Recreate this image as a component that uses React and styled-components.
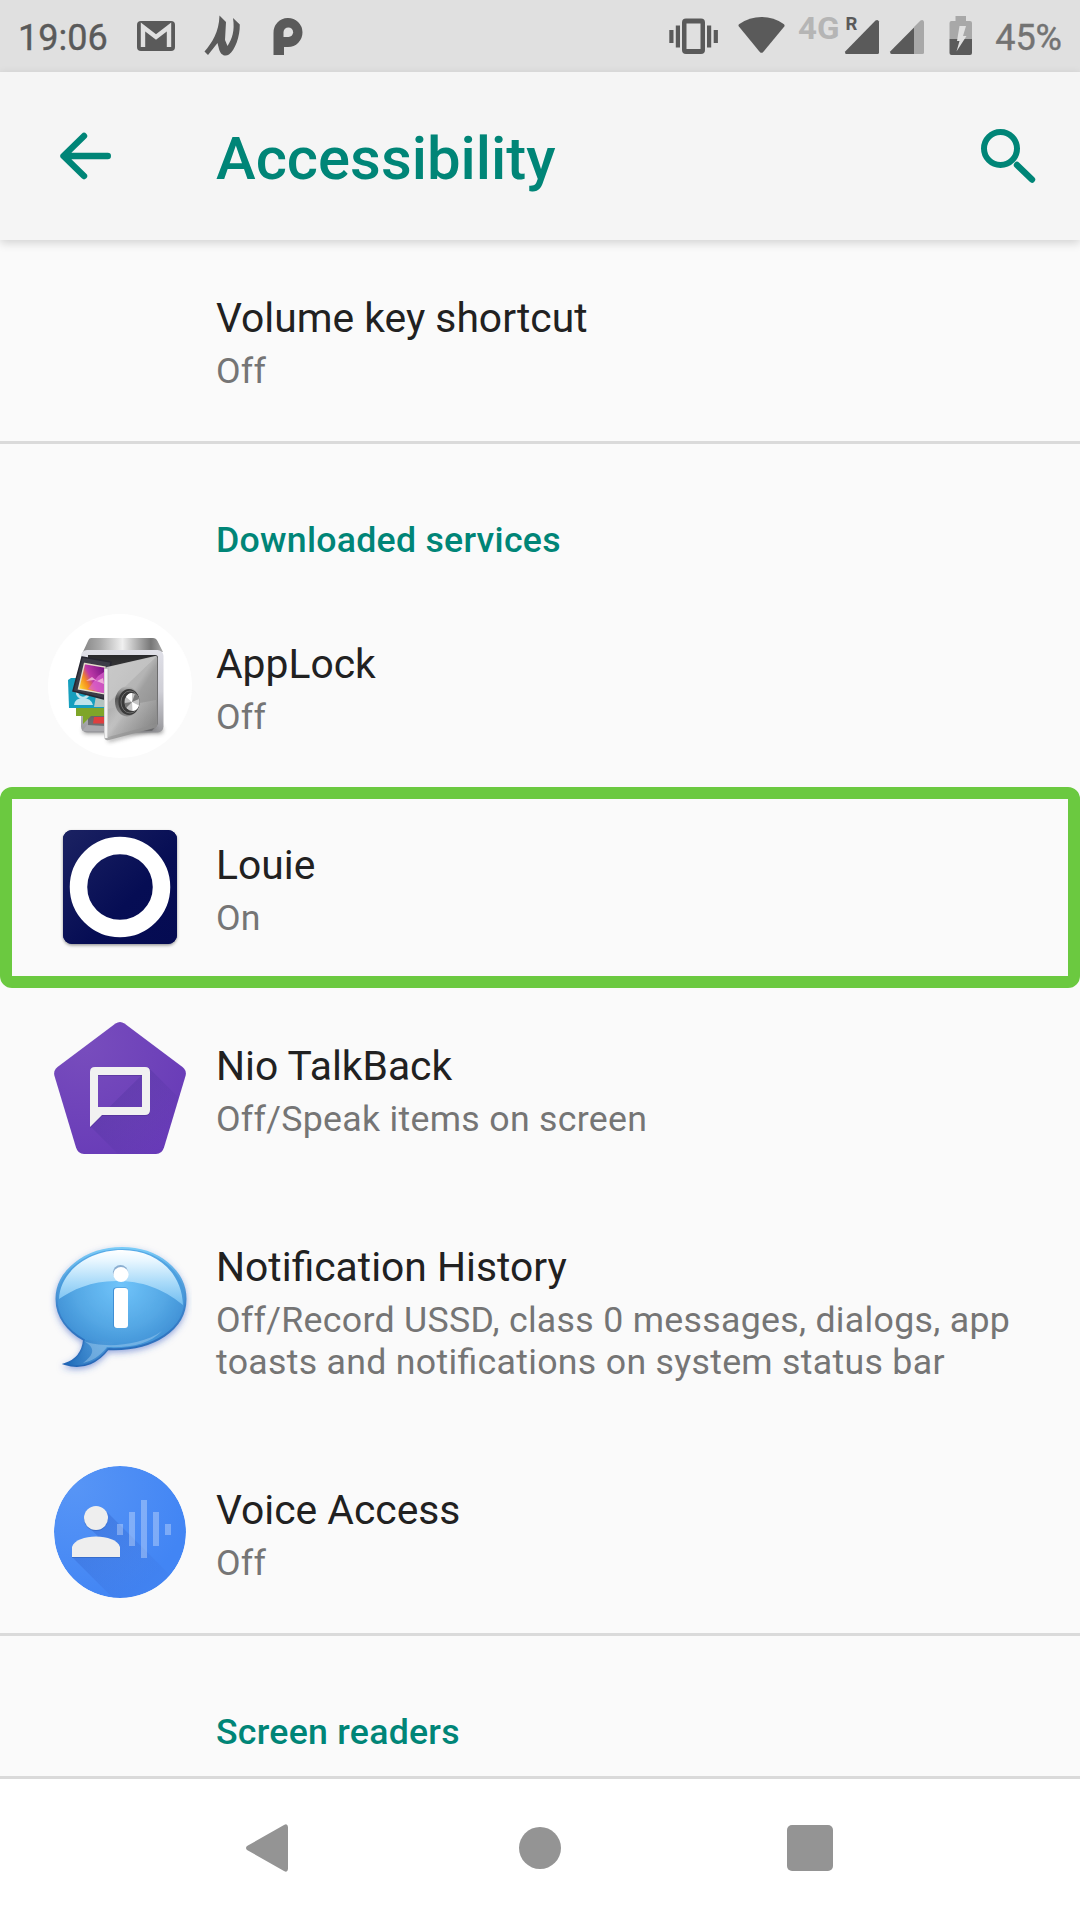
import React from "react";
import styled, { createGlobalStyle, css } from "styled-components";

const Global = createGlobalStyle`
  * { box-sizing: border-box; }
  body { margin: 0; background: #fafafa; font-family: Roboto, "Liberation Sans", sans-serif; }
  svg { display: block; }
`;

const Screen = styled.div`
  width: 1080px;
  height: 1920px;
  display: flex;
  flex-direction: column;
  overflow: hidden;
  background: #fafafa;
`;

const StatusBar = styled.div`
  flex: none;
  height: 72px;
  display: flex;
  align-items: center;
  justify-content: space-between;
  padding: 0 18px;
  background: #e0e0e0;
`;

const StatusText = styled.span`
  min-width: ${(p) => p.$width}px;
  padding-top: 3px;
  font-size: 36px;
  line-height: 42px;
  white-space: nowrap;
  text-align: ${(p) => p.$align || "left"};
  color: ${(p) => p.$color};
  -webkit-text-stroke: 0.4px ${(p) => p.$color};
`;

const StatusGroup = styled.div`
  display: flex;
  align-items: center;
`;

const StatusGlyph = styled.svg`
  flex: none;
  width: ${(p) => p.$w}px;
  height: 72px;
`;

const AppBar = styled.header`
  flex: none;
  height: 168px;
  display: flex;
  align-items: center;
  padding: 0 36px 0 48px;
  background: #f5f5f5;
  position: relative;
  box-shadow: 0 3px 9px rgba(0, 0, 0, 0.16);
`;

const AppTitle = styled.h1`
  flex: 1;
  margin: 0 0 0 96px;
  padding-top: 5px;
  font-size: 59.8px;
  line-height: 70px;
  font-weight: 500;
  color: #008577;
`;

const List = styled.main`
  flex: 1;
  min-height: 0;
  overflow: hidden;
  display: flex;
  flex-direction: column;
`;

const Divider = styled.div`
  flex: none;
  height: 3px;
  background: #dadada;
`;

const Category = styled.h2`
  flex: none;
  height: 142px;
  margin: 0;
  padding: 75px 48px 0 216px;
  font-size: 35.7px;
  line-height: 42px;
  font-weight: 500;
  letter-spacing: 0.25px;
  color: #008577;
`;

const Row = styled.div`
  flex: none;
  display: flex;
  align-items: center;
  padding-right: 48px;
  position: relative;
  ${(p) =>
    p.$highlighted &&
    css`
      &::after {
        content: "";
        position: absolute;
        inset: 0;
        border: 12px solid #6bc940;
        border-radius: 12px;
      }
    `}
`;

const IconCell = styled.div`
  flex: none;
  width: 216px;
  padding: 0 0 1px 48px;
`;

const RowText = styled.div`
  flex: 1;
  padding: 54px 0 49px;
`;

const RowTitle = styled.div`
  margin-bottom: 8px;
  font-size: 40.8px;
  line-height: 48px;
  color: #212121;
`;

const RowSummary = styled.div`
  font-size: 35.7px;
  line-height: 42px;
  letter-spacing: 0.3px;
  font-feature-settings: "liga" 1;
  color: #757575;
`;

const NavBar = styled.nav`
  flex: none;
  height: 144px;
  display: flex;
  align-items: center;
  justify-content: center;
  padding-bottom: 3px;
  border-top: 3px solid #dadada;
  background: #fff;
`;

const NavButton = styled.div`
  width: 270px;
  display: flex;
  justify-content: center;
`;

function NotificationGlyphs() {
  return (
    <StatusGlyph $w={200} viewBox="110 0 200 72">
      <rect x="137" y="21" width="38" height="30" rx="4" fill="#5a5a5a" />
      <path d="M143 47V27L156 37L169 27V47" fill="none" stroke="#e0e0e0" strokeWidth="4.4" />
      <path d="M219.500 15.500L226 22L225 40L227.500 46C232 39 235 31 233 18L239.800 24.500C240 37 235 50 229 54.500C225 57 220.500 55 219 49L217.500 43L208 55L204.500 51.500C212 43 219 32 219.500 15.500Z" fill="#5a5a5a" />
      <path d="M273.500 55V33A14.500 14.500 0 1 1 288 47H284V55Z" fill="#5a5a5a" />
      <path d="M283.500 37V32A4.800 4.800 0 1 1 288.500 37Z" fill="#e0e0e0" />
    </StatusGlyph>
  );
}

function SystemGlyphs() {
  return (
    <StatusGlyph $w={334} viewBox="660 0 334 72">
      <g fill="#5a5a5a">
        <path fillRule="evenodd" d="M686 18.500H701A4 4 0 0 1 705 22.500V50A4 4 0 0 1 701 54H686A4 4 0 0 1 682 50V22.500A4 4 0 0 1 686 18.500ZM686.500 23.500V49H700.500V23.500Z" />
        <rect x="675.800" y="25.500" width="4.200" height="22" />
        <rect x="669.300" y="30" width="4.200" height="13" />
        <rect x="707" y="25.500" width="4.200" height="22" />
        <rect x="713.700" y="30" width="4.200" height="13" />
        <path d="M739 24.200C753 14.700 770 14.700 784 24.200Q785 25.300 784.300 26.500L763 52.200Q761.500 53.500 760 52.200L738.900 26.500Q738 25.300 739 24.200Z" />
        <path d="M879 21.500V52.500Q879 54 877.500 54H846Q844.500 53.500 845.200 51.500L875.500 20.500Q878 19 879 21.500Z" />
      </g>
      <path d="M924 21.500V52.500Q924 54 922.500 54H914V27L920.500 20.500Q923 19 924 21.500Z" fill="#a8a8a8" />
      <path d="M914 27.500V54H891.500Q889.500 53.500 890.200 51.500Z" fill="#5a5a5a" />
      <path d="M949.500 39V23Q949.500 21 951.500 21H955.500V16H966V21H970Q972 21 972 23V39Z" fill="#a8a8a8" />
      <path d="M949.500 39H972V53Q972 55 970 55H951.500Q949.500 55 949.500 53Z" fill="#5a5a5a" />
      <path d="M959.500 26H966L963 36H966.500L956.500 51.500L959.500 41H957Z" fill="#e0e0e0" />
      <text x="798" y="39" fontFamily="Roboto" fontWeight="700" fontSize="31" textLength="41.500" lengthAdjust="spacingAndGlyphs" fill="#b5b5b5">4G</text>
      <text x="845.500" y="30" fontFamily="Roboto" fontWeight="700" fontSize="18.500" fill="#5a5a5a">R</text>
    </StatusGlyph>
  );
}

function BackArrow() {
  return (
    <svg width="72" height="72" viewBox="48 120 72 72" fill="none" stroke="#008577" strokeWidth="6.400" strokeLinecap="round" strokeLinejoin="round">
      <path d="M107.800 156H64M84 136L63.500 156L84 176" />
    </svg>
  );
}

function SearchGlyph() {
  return (
    <svg width="72" height="72" viewBox="972 120 72 72" fill="none" stroke="#008577" strokeLinecap="round">
      <circle cx="1000.500" cy="148.500" r="16.500" strokeWidth="6" />
      <path d="M1017 165L1032 179.500" strokeWidth="6.400" />
    </svg>
  );
}

function AppLockIcon() {
  return (
    <svg width="144" height="144" viewBox="48 614 144 144">
      <defs>
        <linearGradient id="al-top">
          <stop offset="0" stopColor="#858585" />
          <stop offset="0.22" stopColor="#aaa" />
          <stop offset="0.5" stopColor="#f0f0f0" />
          <stop offset="0.85" stopColor="#777" />
          <stop offset="1" stopColor="#aaa" />
        </linearGradient>
        <linearGradient id="al-body" x2="0" y2="1">
          <stop offset="0" stopColor="#e0e0e8" />
          <stop offset="0.5" stopColor="#cfcfd6" />
          <stop offset="1" stopColor="#98989c" />
        </linearGradient>
        <linearGradient id="al-inside" x2="0" y2="1">
          <stop offset="0" stopColor="#2a2a2c" />
          <stop offset="0.5" stopColor="#4a4a4c" />
          <stop offset="1" stopColor="#77777a" />
        </linearGradient>
        <linearGradient id="al-door" x1="0" y1="0" x2="1" y2="1">
          <stop offset="0" stopColor="#c0c0c0" />
          <stop offset="0.48" stopColor="#b4b4b4" />
          <stop offset="0.55" stopColor="#a0a0a0" />
          <stop offset="1" stopColor="#858585" />
        </linearGradient>
        <linearGradient id="al-shine" x2="1" y2="0.600">
          <stop offset="0" stopColor="#8c8c8c" />
          <stop offset="0.4" stopColor="#dcdcdc" />
          <stop offset="1" stopColor="#858585" />
        </linearGradient>
        <linearGradient id="al-ring" x2="0" y2="1">
          <stop offset="0" stopColor="#b5b5b5" />
          <stop offset="0.4" stopColor="#555" />
          <stop offset="1" stopColor="#8a8a8a" />
        </linearGradient>
        <linearGradient id="al-photo" x1="0" y1="0.800" x2="1" y2="0.200">
          <stop offset="0" stopColor="#ffe030" />
          <stop offset="0.3" stopColor="#f58a20" />
          <stop offset="0.5" stopColor="#c03aa8" />
          <stop offset="1" stopColor="#7a1285" />
        </linearGradient>
        <filter id="al-blur" x="-20%" y="-200%" width="140%" height="500%">
          <feGaussianBlur stdDeviation="2" />
        </filter>
      </defs>
      <circle cx="120" cy="686" r="72" fill="#fff" />
      <rect x="83" y="727" width="80" height="6.500" rx="3" fill="#555" opacity="0.6" filter="url(#al-blur)" />
      <path d="M91 638H153Q156 638 157.500 641L163 652L82 654L88 641Q89 638 91 638Z" fill="url(#al-top)" />
      <rect x="81" y="650" width="82.500" height="82.500" rx="6" fill="url(#al-body)" />
      <path d="M88 655H155Q158 655 158 658V724L152 731H105L88 726Z" fill="url(#al-inside)" />
      <path d="M87 725L105 726V731H82Z" fill="#a9a9ad" />
      <path d="M68 680L71 678H106V708H69Z" fill="#169fbe" />
      <path d="M96 696H105V707H94Z" fill="#b4c4c0" />
      <path d="M74 705Q75 698 83 698Q91 698 93 705Z" fill="#bde3ec" />
      <circle cx="83" cy="692" r="6" fill="none" stroke="#bde3ec" strokeWidth="2.500" />
      <path d="M76 708H105V716H91L83 724V716H76Z" fill="#7ea529" />
      <path d="M94 717H105V723.500H93Z" fill="#df3f3f" />
      <path d="M82 657L111 662L104 699L73 691Z" fill="#3c3c47" stroke="#272731" strokeWidth="1.500" />
      <path d="M84.500 663.500L105 667V694L78.500 689Z" fill="url(#al-photo)" stroke="#e5dccc" strokeWidth="1.400" />
      <path d="M88 689L98 676L104 672V693Z" fill="#de67d0" opacity="0.7" />
      <path d="M86 681L92 677L97 681L103 678L104 684L94 680Z" fill="#f6c0e0" opacity="0.8" />
      <path d="M107 739L156 727L158 729L109 742Z" fill="#444" opacity="0.5" filter="url(#al-blur)" />
      <path d="M107 667L155 656Q157.500 655.500 157.500 658V724Q157.500 727 154.500 728L109 740Q104 741 104 736V671Q104 668 107 667Z" fill="url(#al-door)" />
      <path d="M108 709V737L156 724V700Z" fill="url(#al-shine)" opacity="0.4" />
      <path d="M109 667L157 656L109 702Z" fill="#e0e0e0" opacity="0.3" />
      <path d="M106 669V738" stroke="#f2f2f2" strokeWidth="3" />
      <ellipse cx="127" cy="701.500" rx="12" ry="15" fill="url(#al-ring)" />
      <ellipse cx="129" cy="702" rx="10.500" ry="13" fill="#3a3a3a" />
      <ellipse cx="130" cy="702" rx="9" ry="11" fill="none" stroke="#707070" strokeWidth="1" />
      <ellipse cx="132" cy="702" rx="7.500" ry="9" fill="#c4c4c4" />
      <path d="M132 702L126 697A7.500 9 0 0 1 132 693ZM132 702L139 705.500A7.500 9 0 0 1 132.500 711Z" fill="#fff" />
      <path d="M132 702L135 693.800A7.500 9 0 0 1 139 699ZM132 702L126 708A7.500 9 0 0 1 124.800 703Z" fill="#777" />
    </svg>
  );
}

function LouieIcon() {
  return (
    <svg width="144" height="144" viewBox="48 815 144 144">
      <defs>
        <linearGradient id="lo-bg" x1="0" y1="0" x2="1" y2="1">
          <stop offset="0" stopColor="#1b2262" />
          <stop offset="0.6" stopColor="#060d54" />
          <stop offset="1" stopColor="#050b52" />
        </linearGradient>
        <filter id="lo-shadow" x="-10%" y="-10%" width="120%" height="120%">
          <feDropShadow dx="0" dy="1.500" stdDeviation="1.500" floodOpacity="0.4" />
        </filter>
      </defs>
      <rect x="63" y="830" width="114" height="114" rx="9" fill="#060d54" filter="url(#lo-shadow)" />
      <rect x="63" y="830" width="114" height="114" rx="9" fill="url(#lo-bg)" />
      <circle cx="120" cy="887" r="41.500" fill="none" stroke="#fff" strokeWidth="17.500" />
    </svg>
  );
}

function TalkBackIcon() {
  return (
    <svg width="144" height="144" viewBox="48 1016 144 144">
      <defs>
        <radialGradient id="tb-bg" cx="0.25" cy="0.2" r="0.9">
          <stop offset="0" stopColor="#784dbd" />
          <stop offset="1" stopColor="#673ab7" />
        </radialGradient>
        <linearGradient id="tb-shade" gradientUnits="userSpaceOnUse" x1="112" y1="1088" x2="165" y2="1141">
          <stop offset="0" stopColor="#402c90" stopOpacity="0.28" />
          <stop offset="1" stopColor="#402c90" stopOpacity="0" />
        </linearGradient>
        <clipPath id="tb-clip">
          <path d="M115.500 1023.500Q120 1020.500 124.500 1023.500L182.500 1067Q187 1070.500 185.500 1076L164 1147.500Q162 1154 156 1154H84Q78 1154 76 1147.500L54.500 1076Q53 1070.500 57.500 1067Z" />
        </clipPath>
      </defs>
      <g clipPath="url(#tb-clip)">
        <rect x="48" y="1016" width="144" height="144" fill="url(#tb-bg)" />
        <path d="M149 1068L229 1148L170 1206L90 1126Z" fill="url(#tb-shade)" />
      </g>
      <path transform="translate(0 1)" fill="#432780" opacity="0.4" fillRule="evenodd" d="M95 1067H145Q150 1067 150 1072V1110Q150 1115 145 1115H102L90 1127V1072Q90 1067 95 1067ZM98 1075V1107H142V1075Z" />
      <path fill="#f1f1f1" fillRule="evenodd" d="M95 1067H145Q150 1067 150 1072V1110Q150 1115 145 1115H102L90 1127V1072Q90 1067 95 1067ZM98 1075V1107H142V1075Z" />
    </svg>
  );
}

function NotificationHistoryIcon() {
  return (
    <svg width="144" height="144" viewBox="48 1238 144 144">
      <defs>
        <radialGradient id="nh-bg" cx="0.5" cy="0.32" r="0.7">
          <stop offset="0" stopColor="#70c4fa" />
          <stop offset="0.5" stopColor="#55a8e5" />
          <stop offset="1" stopColor="#3080ca" />
        </radialGradient>
        <linearGradient id="nh-gloss" x2="0" y2="1">
          <stop offset="0" stopColor="#fff" />
          <stop offset="0.2" stopColor="#e7f6ff" />
          <stop offset="0.6" stopColor="#a8daf9" />
          <stop offset="1" stopColor="#72bdf0" />
        </linearGradient>
        <linearGradient id="nh-edge" x2="0" y2="1">
          <stop offset="0" stopColor="#7accf8" />
          <stop offset="0.5" stopColor="#3b83cb" />
          <stop offset="1" stopColor="#2465b5" />
        </linearGradient>
        <linearGradient id="nh-tail">
          <stop offset="0" stopColor="#1765b5" />
          <stop offset="1" stopColor="#6faee3" stopOpacity="0" />
        </linearGradient>
        <filter id="nh-shadow" x="-20%" y="-20%" width="140%" height="140%">
          <feDropShadow dx="0" dy="2.500" stdDeviation="3" floodColor="#3157c0" floodOpacity="0.5" />
        </filter>
      </defs>
      <path d="M122 1248C158 1248 185.500 1271 185.500 1299C185.500 1328 155 1351 108 1349C99 1361 84 1370 65 1364C77 1360 83 1351 84 1340C68 1331 56.500 1317 56.500 1299C56.500 1271 86 1248 122 1248Z" fill="url(#nh-bg)" stroke="url(#nh-edge)" strokeWidth="2" filter="url(#nh-shadow)" />
      <path d="M84 1340C83 1351 77 1360 65 1364C84 1369 99 1361 108 1349L116 1342Z" fill="url(#nh-tail)" />
      <path d="M84 1341C100 1348 140 1347 162 1331C150 1344 130 1348 107 1347C100 1356 92 1361 83 1363C98 1352 92 1346 84 1341Z" fill="#b5d9f5" opacity="0.4" />
      <path d="M59 1299C60 1272 88 1250 122 1250C156 1250 182 1272 183 1305C162 1288 142 1281 116 1281C91 1281 72 1290 59 1299Z" fill="url(#nh-gloss)" />
      <circle cx="120.500" cy="1272.500" r="7.600" fill="#8baed0" />
      <circle cx="121" cy="1274.500" r="7.600" fill="#fff" />
      <rect x="113" y="1287.500" width="15" height="40.500" rx="3" fill="#3f8fd4" />
      <rect x="114" y="1288" width="14" height="40" rx="3" fill="#fff" />
    </svg>
  );
}

function VoiceAccessIcon() {
  return (
    <svg width="144" height="144" viewBox="48 1460 144 144">
      <defs>
        <radialGradient id="va-bg" cx="0.15" cy="0.15" r="0.9">
          <stop offset="0" stopColor="#5795f6" />
          <stop offset="1" stopColor="#4285f4" />
        </radialGradient>
        <linearGradient id="va-shade" gradientUnits="userSpaceOnUse" x1="90" y1="1530" x2="152" y2="1592">
          <stop offset="0" stopColor="#3264cc" stopOpacity="0.42" />
          <stop offset="1" stopColor="#3c70da" stopOpacity="0.1" />
        </linearGradient>
        <clipPath id="va-clip">
          <circle cx="120" cy="1532" r="66" />
        </clipPath>
      </defs>
      <g clipPath="url(#va-clip)">
        <circle cx="120" cy="1532" r="66" fill="url(#va-bg)" />
        <path d="M105 1510L195 1600L150 1635L72 1557L98 1536L88 1527Z" fill="url(#va-shade)" />
      </g>
      <g fill="#fff" opacity="0.3">
        <rect x="117" y="1524" width="6" height="11" />
        <rect x="129" y="1512" width="6" height="34" />
        <rect x="141" y="1500" width="6" height="58" />
        <rect x="153" y="1512" width="6" height="34" />
        <rect x="165" y="1524" width="6" height="11" />
      </g>
      <g fill="#2b5cb0" opacity="0.5">
        <circle cx="96" cy="1519" r="12" />
        <rect x="72" y="1556" width="48" height="2" />
      </g>
      <g fill="#eee">
        <circle cx="96" cy="1518" r="12" />
        <path d="M72 1557V1547C74 1540 85 1536.500 96 1536.500S118 1540 120 1547V1557Z" />
      </g>
    </svg>
  );
}

const services = [
  { title: "AppLock", summary: "Off", Icon: AppLockIcon },
  { title: "Louie", summary: "On", Icon: LouieIcon, highlighted: true },
  { title: "Nio TalkBack", summary: "Off/Speak items on screen", Icon: TalkBackIcon },
  {
    title: "Notification History",
    summary: "Off/Record USSD, class 0 messages, dialogs, app toasts and notifications on system status bar",
    Icon: NotificationHistoryIcon,
  },
  { title: "Voice Access", summary: "Off", Icon: VoiceAccessIcon },
];

function Preference({ title, summary, Icon, highlighted }) {
  return (
    <Row $highlighted={highlighted}>
      <IconCell>{Icon && <Icon />}</IconCell>
      <RowText>
        <RowTitle>{title}</RowTitle>
        <RowSummary>{summary}</RowSummary>
      </RowText>
    </Row>
  );
}

export default function App() {
  return (
    <>
      <Global />
      <Screen>
        <StatusBar>
          <StatusGroup>
            <StatusText $width={92} $color="#5a5a5a">19:06</StatusText>
            <NotificationGlyphs />
          </StatusGroup>
          <StatusGroup>
            <SystemGlyphs />
            <StatusText $width={68} $align="right" $color="#737373">45%</StatusText>
          </StatusGroup>
        </StatusBar>
        <AppBar>
          <BackArrow />
          <AppTitle>Accessibility</AppTitle>
          <SearchGlyph />
        </AppBar>
        <List>
          <Preference title="Volume key shortcut" summary="Off" />
          <Divider />
          <Category>Downloaded services</Category>
          {services.map((s) => (
            <Preference key={s.title} {...s} />
          ))}
          <Divider />
          <Category>Screen readers</Category>
        </List>
        <NavBar>
          <NavButton>
            <svg width="48" height="48" viewBox="0 0 48 48">
              <path d="M42 3V45Q41.500 49 38 47L1 26Q-1 24 1 22L38 1Q41.500 -1 42 3Z" fill="#949494" />
            </svg>
          </NavButton>
          <NavButton>
            <svg width="42" height="42" viewBox="0 0 42 42">
              <circle cx="21" cy="21" r="21" fill="#949494" />
            </svg>
          </NavButton>
          <NavButton>
            <svg width="46" height="46" viewBox="0 0 46 46">
              <rect width="46" height="46" rx="5" fill="#949494" />
            </svg>
          </NavButton>
        </NavBar>
      </Screen>
    </>
  );
}
